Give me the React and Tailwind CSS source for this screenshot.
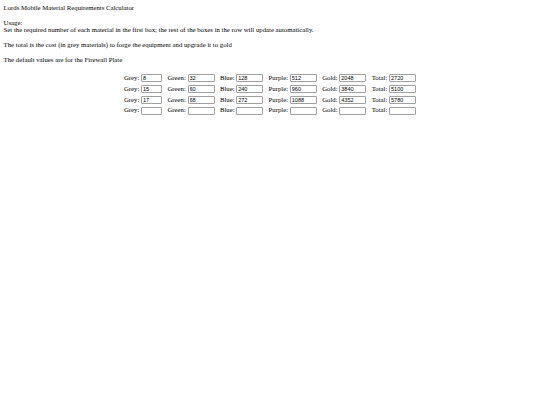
import React from "react";

const rows = [
  ["8", "32", "128", "512", "2048", "2720"],
  ["15", "60", "240", "960", "3840", "5100"],
  ["17", "68", "272", "1088", "4352", "5780"],
  ["", "", "", "", "", ""],
];
const labels = ["Grey", "Green", "Blue", "Purple", "Gold", "Total"];

function Field({ label, value, narrow }) {
  return (
    <div className="whitespace-nowrap leading-[8px]">
      {label}:{" "}
      <input
        readOnly
        value={value}
        className={
          (narrow ? "w-[21px] " : "w-[27px] ") +
          "inline-block h-[8px] border border-[#a0a0a0] rounded-[1px] bg-white px-[1px] py-0 align-middle text-[5.5px] leading-[6px] text-black outline-none"
        }
        style={{ fontFamily: '"Liberation Sans", Arial, sans-serif' }}
      />
    </div>
  );
}

export default function App() {
  return (
    <div
      className="m-0 px-[3.6px] pt-[4.2px] pb-[3.6px] text-[6.75px] leading-[7.3px] text-black bg-white min-h-[405px]"
      style={{ fontFamily: '"Liberation Serif", "Times New Roman", serif' }}
    >
      Lords Mobile Material Requirements Calculator
      <br />
      <br />
      Usage:
      <br />
      Set the required number of each material in the first box; the rest of the boxes in the row will update automatically.
      <p className="my-[7.7px]">The total is the cost (in grey materials) to forge the equipment and upgrade it to gold</p>
      <p className="my-[7.7px]">The default values are for the Firewall Plate</p>
      <div className="mx-auto grid w-fit grid-cols-[repeat(6,auto)] gap-x-[5.4px] gap-y-[2.5px] pt-[2.6px]">
        {rows.map((r, i) =>
          r.map((v, j) => (
            <Field key={i + "-" + j} label={labels[j]} value={v} narrow={j === 0} />
          ))
        )}
      </div>
    </div>
  );
}
